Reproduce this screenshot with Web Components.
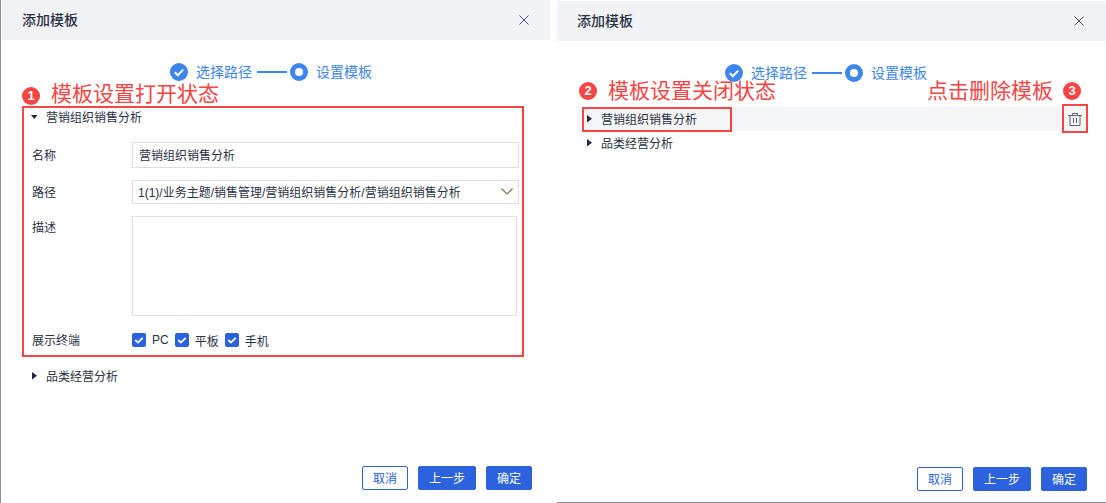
<!DOCTYPE html>
<html lang="zh">
<head>
<meta charset="utf-8">
<title>添加模板</title>
<style>
  html, body { margin: 0; height: 100%; background: #fff; }
  body {
    font: 12px "Liberation Sans", "Noto Sans CJK SC", sans-serif;
    color: #2a3246;
    overflow: hidden;
  }
  .page { display: flex; width: 1106px; height: 503px; box-sizing: border-box; border-left: 1px solid #8a93a8; }
</style>
</head>
<body>
<div class="page">
  <tpl-dialog style="margin-left:1px;width:548px">
    <tpl-callout num="1" text="模板设置打开状态" lift style="left:20px;top:82px"></tpl-callout>
    <tpl-mark style="left:20px;top:106px;width:498px;height:247px"></tpl-mark>
    <tpl-row open>营销组织销售分析</tpl-row>
    <tpl-form></tpl-form>
    <tpl-row>品类经营分析</tpl-row>
  </tpl-dialog>
  <tpl-dialog style="margin-left:7px;width:549px" class="second">
    <tpl-callout num="2" text="模板设置关闭状态" style="left:22px;top:76px"></tpl-callout>
    <tpl-callout num="3" text="点击删除模板" flip style="left:370px;top:76px"></tpl-callout>
    <tpl-mark style="left:25px;top:106px;width:146px;height:21px"></tpl-mark>
    <tpl-mark style="left:505px;top:103px;width:22px;height:25px" trash></tpl-mark>
    <tpl-row selected>营销组织销售分析</tpl-row>
    <tpl-row>品类经营分析</tpl-row>
  </tpl-dialog>
</div>

<script>
class TplDialog extends HTMLElement {
  connectedCallback() {
    let second = this.classList.contains("second");
    this.attachShadow({ mode: "open" }).innerHTML = `
    <style>
      :host {
        display: flex;
        flex-direction: column;
        position: relative;
        box-sizing: border-box;
        height: 503px;
        flex: none;
        ${second ? "border-bottom: 1px solid #8a93a8; margin-top: 1px; height: 502px;" : ""}
      }
      header {
        flex: none;
        display: flex;
        align-items: center;
        justify-content: space-between;
        height: 40px;
        padding: 0 ${second ? "22px" : "21px"} 0 20px;
        box-sizing: border-box;
        background: #f2f3f7;
        font-size: 14px;
        font-weight: 500;
        color: #2a3246;
      }
      header span { margin-bottom: 2px; }
      svg { display: block; }
      tpl-steps { margin: 22px 0 0 168px; }
      .body { flex: 1; padding: ${second ? "24px" : "23px"} 20px 0; display: flex; flex-direction: column; }
      footer {
        flex: none;
        display: flex;
        justify-content: flex-end;
        gap: 10px;
        padding: 0 ${second ? "19px" : "18px"} ${second ? "11px" : "13px"} 0;
      }
    </style>
    <header>
      <span>添加模板</span>
      <svg width="10" height="10" viewBox="0 0 10 10" fill="none" stroke="#4a5266" stroke-width="1"><path d="M.5.5l9 9M9.500.5l-9 9"/></svg>
    </header>
    <tpl-steps></tpl-steps>
    <div class="body"><slot></slot></div>
    <footer>
      <tpl-button plain>取消</tpl-button>
      <tpl-button wide>上一步</tpl-button>
      <tpl-button>确定</tpl-button>
    </footer>`;
  }
}

class TplSteps extends HTMLElement {
  connectedCallback() {
    this.attachShadow({ mode: "open" }).innerHTML = `
    <style>
      :host { display: flex; align-items: center; height: 20px; color: #3d86ee; font-size: 14px; flex: none; }
      svg { display: block; flex: none; }
      span { margin: 0 0 2px 8px; width: 56px; white-space: nowrap; }
      i { display: block; width: 30px; height: 2px; background: #3d86ee; margin: 0 3px 0 5px; }
    </style>
    <svg width="18" height="18" viewBox="0 0 18 18"><circle cx="9" cy="9" r="9" fill="#3d86ee"/><path d="M4.800 9.200l3 3 5.400-5.600" fill="none" stroke="#fff" stroke-width="2"/></svg>
    <span>选择路径</span>
    <i></i>
    <svg width="18" height="18" viewBox="0 0 18 18"><circle cx="9" cy="9" r="9" fill="#3d86ee"/><circle cx="9" cy="9" r="4" fill="#fff"/></svg>
    <span>设置模板</span>`;
  }
}

class TplRow extends HTMLElement {
  connectedCallback() {
    let open = this.hasAttribute("open");
    let arrow = open ? "M0 2h6.500L3.250 6z" : "M1 0v7.500L6 3.750z";
    this.attachShadow({ mode: "open" }).innerHTML = `
    <style>
      :host { display: flex; align-items: center; height: 24px; flex: none; color: #2a3246; font-size: 12px; }
      :host([selected]) { background: #f5f6f8; }
      svg { margin: 0 8px 0 9px; display: block; flex: none; }
      span { margin-bottom: 2px; }
    </style>
    <svg width="7" height="8" viewBox="0 0 7 8"><path d="${arrow}" fill="#1f2740"/></svg>
    <span><slot></slot></span>`;
    if(this.previousElementSibling && this.previousElementSibling.tagName == "TPL-FORM") {
      this.style.marginTop = "12px";
    }
  }
}

class TplForm extends HTMLElement {
  connectedCallback() {
    this.attachShadow({ mode: "open" }).innerHTML = `
    <style>
      :host { display: grid; grid-template-columns: 100px 387px; row-gap: 12px; padding: 13px 0 0 10px; flex: none; font-size: 12px; color: #2a3246; }
      .label { display: flex; align-items: center; height: 26px; box-sizing: border-box; padding-bottom: 2px; }
      .field {
        box-sizing: border-box;
        height: 26px;
        border: 1px solid #dcdfe8;
        display: flex;
        align-items: center;
        justify-content: space-between;
        padding: 0 5px 2px 6px;
        white-space: nowrap;
      }
      .path { height: 24px; padding-left: 5px; }
      .label.short { height: 24px; }
      .area { height: 100px; width: 385px; }
      .checks { display: flex; align-items: center; height: 24px; gap: 6px; }
      .terminal { margin-top: 0; height: 24px; }
      svg { display: block; }
    </style>
    <div class="label">名称</div>
    <div class="field">营销组织销售分析</div>
    <div class="label short">路径</div>
    <div class="field path">1(1)/业务主题/销售管理/营销组织销售分析/营销组织销售分析
      <svg width="12" height="7" viewBox="0 0 12 7" fill="none" stroke="#8a6a3a" stroke-width="1.100"><path d="M.5.5L6 6l5.500-5.500"/></svg>
    </div>
    <div class="label" style="align-items:flex-start;height:100px;padding-top:2px;box-sizing:border-box">描述</div>
    <div class="field area"></div>
    <div class="label terminal">展示终端</div>
    <div class="checks">
      <tpl-check>PC</tpl-check>
      <tpl-check>平板</tpl-check>
      <tpl-check>手机</tpl-check>
    </div>`;
  }
}

class TplCheck extends HTMLElement {
  connectedCallback() {
    this.attachShadow({ mode: "open" }).innerHTML = `
    <style>
      :host { display: inline-flex; align-items: center; gap: 6px; font-size: 12px; color: #2a3246; }
      svg { display: block; }
    </style>
    <svg width="14" height="14" viewBox="0 0 14 14"><rect width="14" height="14" rx="2" fill="#2c62de"/><path d="M3.300 7l2.600 2.600 4.800-4.800" fill="none" stroke="#fff" stroke-width="1.800"/></svg>
    <slot></slot>`;
  }
}

class TplButton extends HTMLElement {
  connectedCallback() {
    this.attachShadow({ mode: "open" }).innerHTML = `
    <style>
      :host {
        display: flex;
        align-items: center;
        justify-content: center;
        box-sizing: border-box;
        width: 46px;
        height: 24px;
        padding-bottom: 2px;
        border: 1px solid #2c62de;
        border-radius: 2px;
        background: #2c62de;
        color: #fff;
        font-size: 12px;
      }
      :host([wide]) { width: 58px; }
      :host([plain]) { background: #fff; color: #2c62de; }
    </style>
    <slot></slot>`;
  }
}

/* red notes laid over the screenshot */
class TplCallout extends HTMLElement {
  connectedCallback() {
    let num = this.getAttribute("num");
    let text = this.getAttribute("text");
    let badge = `<b>${num}</b>`;
    let label = `<span>${text}</span>`;
    this.attachShadow({ mode: "open" }).innerHTML = `
    <style>
      :host {
        position: absolute;
        display: flex;
        align-items: center;
        gap: ${this.hasAttribute("flip") ? "10px" : "11px"};
        height: 28px;
        color: #f94444;
        font-size: 21px;
        line-height: 28px;
        white-space: nowrap;
      }
      :host([lift]) span { margin-top: -5px; }
      b {
        display: flex;
        align-items: center;
        justify-content: center;
        width: 18px;
        height: 18px;
        border-radius: 50%;
        background: #f94444;
        color: #fff;
        font-size: 13px;
        font-weight: 700;
      }
    </style>
    ${this.hasAttribute("flip") ? label + badge : badge + label}`;
  }
}

class TplMark extends HTMLElement {
  connectedCallback() {
    this.attachShadow({ mode: "open" }).innerHTML = `
    <style>
      :host { position: absolute; display: block; border: 2px solid #f94444; }
      svg { position: absolute; left: 4px; top: 7px; }
    </style>
    ${this.hasAttribute("trash") ? `<svg width="14" height="13" viewBox="0 0 14 13" fill="none" stroke="#5a6275" stroke-width="1"><path d="M0 2.500h14M4.500 2.500V.5h5v2M2 2.500v10h10v-10M5.500 5v5M8.500 5v5"/></svg>` : ""}`;
  }
}

customElements.define("tpl-dialog", TplDialog);
customElements.define("tpl-steps", TplSteps);
customElements.define("tpl-row", TplRow);
customElements.define("tpl-form", TplForm);
customElements.define("tpl-check", TplCheck);
customElements.define("tpl-button", TplButton);
customElements.define("tpl-callout", TplCallout);
customElements.define("tpl-mark", TplMark);
</script>
</body>
</html>
